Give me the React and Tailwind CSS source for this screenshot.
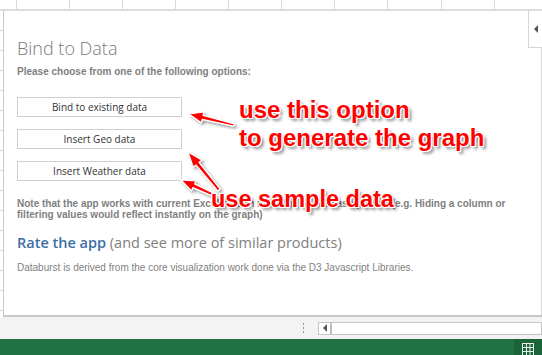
import React from "react";

function arrowPoints(tx, ty, hx, hy, wt, wn, wh, hl) {
  const dx = hx - tx, dy = hy - ty;
  const len = Math.sqrt(dx * dx + dy * dy);
  const ux = dx / len, uy = dy / len;
  const px = -uy, py = ux;
  const bx = hx - ux * hl, by = hy - uy * hl;
  const pts = [
    [tx + px * wt / 2, ty + py * wt / 2],
    [bx + px * wn / 2, by + py * wn / 2],
    [bx + px * wh / 2, by + py * wh / 2],
    [hx, hy],
    [bx - px * wh / 2, by - py * wh / 2],
    [bx - px * wn / 2, by - py * wn / 2],
    [tx - px * wt / 2, ty - py * wt / 2],
  ];
  return pts.map((p) => p[0].toFixed(1) + "," + p[1].toFixed(1)).join(" ");
}

const annot = {
  textShadow:
    "1px 0 0 #fff, -1px 0 0 #fff, 0 1px 0 #fff, 0 -1px 0 #fff, 1px 1px 0 #fff, -1px -1px 0 #fff, 1px -1px 0 #fff, -1px 1px 0 #fff, 3px 3px 3px rgba(0,0,0,0.45)",
};

export default function App() {
  const topCols = [17, 53, 53, 53, 53, 53, 53, 53, 54, 53, 53];
  const rows = Array.from({ length: 16 });
  return (
    <div className="relative w-[542px] h-[355px] overflow-hidden bg-white flex flex-col font-['Liberation_Sans',Arial,sans-serif]">
      {/* top grid strip */}
      <div className="h-[11px] flex border-b-2 border-[#dcdcdc] shrink-0">
        {topCols.map((w, i) => (
          <div key={i} style={{ width: w }} className="h-full border-r border-[#d9d9d9] shrink-0" />
        ))}
      </div>

      {/* middle */}
      <div className="flex-1 flex min-h-0">
        <div className="w-[3px] flex flex-col shrink-0">
          {rows.map((_, i) => (
            <div key={i} className="h-[20px] border-b border-[#d9d9d9] shrink-0" />
          ))}
        </div>
        <div className="flex-1 flex border-l border-[#c8c8c8] border-b-2 border-b-[#c6c6c6] min-w-0">
          <div className="flex-1 pl-[13px] pt-[25px] min-w-0">
            <div className="font-['Open_Sans',sans-serif] font-light text-[18px] leading-[24px] text-[#7a7a7a]">
              Bind to Data
            </div>
            <div className="mt-[6px] text-[10px] leading-[12px] font-bold text-[#7f7f7f]">
              Please choose from one of the following options:
            </div>
            <div className="mt-[19px] flex flex-col gap-[12px]">
              {["Bind to existing data", "Insert Geo data", "Insert Weather data"].map((t) => (
                <div
                  key={t}
                  className="w-[165px] h-[20px] border border-[#cfcfcf] bg-white flex items-center justify-center font-['Open_Sans',sans-serif] text-[10px] text-[#333]"
                >
                  {t}
                </div>
              ))}
            </div>
            <div className="mt-[17px] text-[10px] leading-[11px] font-bold text-[#7f7f7f] whitespace-nowrap">
              Note that the app works with current Excel data in real time as well as updates (e.g. Hiding a column or
              <br />
              filtering values would reflect instantly on the graph)
            </div>
            <div className="mt-[13px] font-['Open_Sans',sans-serif] text-[14.5px] leading-[20px] text-[#808080]">
              <span className="font-semibold text-[#3b6ea5]">Rate the app</span> (and see more of similar products)
            </div>
            <div className="mt-[9px] text-[10px] leading-[12px] text-[#7f7f7f]">
              Databurst is derived from the core visualization work done via the D3 Javascript Libraries.
            </div>
          </div>
          <div className="w-[14px] shrink-0 flex flex-col">
            <div className="h-[37px] border-l border-b border-[#d6d6d6] flex items-center justify-center">
              <div className="w-0 h-0 border-y-[4px] border-y-transparent border-r-[4px] border-r-[#555]" />
            </div>
            <div className="flex-1 border-r border-[#d6d6d6]" />
          </div>
        </div>
      </div>

      {/* sheet tab / scroll bar strip */}
      <div className="h-[22px] bg-[#f3f3f3] flex items-center shrink-0">
        <div className="w-[303px]" />
        <div className="flex flex-col gap-[2px] w-[2px]">
          <div className="w-[1px] h-[2px] bg-[#9a9a9a]" />
          <div className="w-[1px] h-[2px] bg-[#9a9a9a]" />
          <div className="w-[1px] h-[2px] bg-[#9a9a9a]" />
        </div>
        <div className="w-[13px]" />
        <div className="flex-1 h-[13px] flex border border-[#c6c6c6] bg-white">
          <div className="w-[11px] flex items-center justify-center">
            <div className="w-0 h-0 border-y-[4px] border-y-transparent border-r-[4px] border-r-[#555]" />
          </div>
          <div className="w-[2px] bg-[#bdbdbd]" />
          <div className="flex-1" />
        </div>
      </div>

      {/* status bar */}
      <div className="h-[16px] bg-[#217346] flex justify-end shrink-0">
        <div className="w-[28px] h-full bg-[#1b6439] flex justify-center pt-[4px]">
          <svg width="12" height="14" viewBox="0 0 12 14">
            <rect x="0.5" y="0.5" width="11" height="13" fill="none" stroke="#e8f0ea" strokeWidth="1" />
            <line x1="4.5" y1="0" x2="4.5" y2="14" stroke="#e8f0ea" />
            <line x1="8" y1="0" x2="8" y2="14" stroke="#e8f0ea" />
            <line x1="0" y1="4.5" x2="12" y2="4.5" stroke="#e8f0ea" />
            <line x1="0" y1="8.5" x2="12" y2="8.5" stroke="#e8f0ea" />
          </svg>
        </div>
      </div>

      {/* annotation arrows */}
      <svg className="absolute left-0 top-0 pointer-events-none" width="542" height="355">
        <defs>
          <filter id="sh" x="-20%" y="-20%" width="140%" height="140%">
            <feDropShadow dx="2" dy="2" stdDeviation="1.5" floodColor="#000" floodOpacity="0.4" />
          </filter>
        </defs>
        <g filter="url(#sh)" fill="#ff0000" stroke="#fff" strokeWidth="1.2" strokeLinejoin="round">
          <polygon points={arrowPoints(234, 125, 189, 114, 2.5, 4, 11, 14)} />
          <polygon points={arrowPoints(219, 190, 188, 152, 3, 4, 11, 15)} />
          <polygon points={arrowPoints(214, 195, 181, 180, 3, 4, 11, 14)} />
        </g>
      </svg>

      {/* annotation texts */}
      <div
        className="absolute left-[239px] top-[96px] text-[24px] leading-[28px] font-bold text-[#ff0000] font-['Liberation_Sans',Arial,sans-serif] whitespace-nowrap"
        style={annot}
      >
        use this option
        <br />
        to generate the graph
      </div>
      <div
        className="absolute left-[211px] top-[185px] text-[23.5px] leading-[28px] font-bold text-[#ff0000] font-['Liberation_Sans',Arial,sans-serif] whitespace-nowrap"
        style={annot}
      >
        use sample data
      </div>
    </div>
  );
}
